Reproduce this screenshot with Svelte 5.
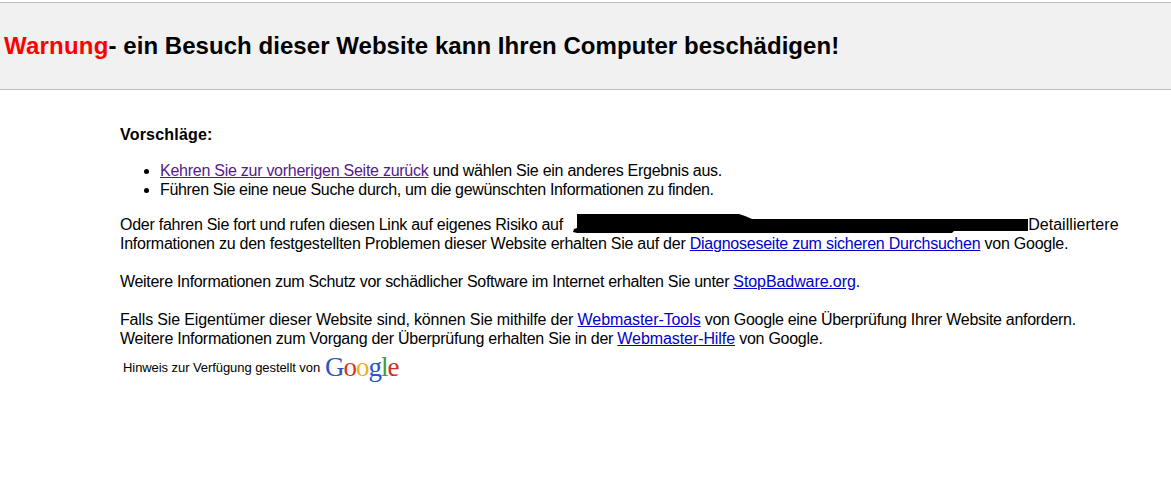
<script>
  const logo = [
    { ch: 'G', color: '#2a55c4' },
    { ch: 'o', color: '#d8321f' },
    { ch: 'o', color: '#e5b21c' },
    { ch: 'g', color: '#2a55c4' },
    { ch: 'l', color: '#3d9a3a' },
    { ch: 'e', color: '#c9321f' }
  ];
</script>

<header class="banner">
  <h1><span class="warn">Warnung</span>- ein Besuch dieser Website kann Ihren Computer beschädigen!</h1>
</header>

<main class="content">
  <p class="heading">Vorschläge:</p>
  <ul>
    <li><a class="visited" href="#back">Kehren Sie zur vorherigen Seite zurück</a> und wählen Sie ein anderes Ergebnis aus.</li>
    <li class="tight">Führen Sie eine neue Suche durch, um die gewünschten Informationen zu finden.</li>
  </ul>
  <p class="para first">
    Oder fahren Sie fort und rufen diesen Link auf eigenes Risiko auf
    <svg class="redact" width="459" height="21" viewBox="0 0 459 21" aria-hidden="true">
      <path d="M8 1 L170 1 L176 3 L183 6 L459 6 L459 18 L385 18 L383 20 L8 20 L4 19 L5 16 L8 15 Z" fill="#000" />
    </svg><span class="detail">Detailliertere</span><br />
    <span class="diag">Informationen zu den festgestellten Problemen dieser Website erhalten Sie auf der <a href="#diag">Diagnoseseite zum sicheren Durchsuchen</a> von Google.</span>
  </p>
  <p class="para">
    <span class="narrow">Weitere Informationen zum Schutz vor schädlicher Software im Internet erhalten Sie unter <a class="wide" href="#sb">StopBadware.org</a>.</span>
  </p>
  <p class="para">
    <span class="loose">Falls Sie Eigentümer dieser Website sind, können Sie mithilfe der <a class="wide" href="#wt">Webmaster-Tools</a></span>
    <span class="narrow">von Google eine Überprüfung Ihrer Website anfordern.</span><br />
    Weitere Informationen zum Vorgang der Überprüfung erhalten Sie in der <a class="wide" href="#wh">Webmaster-Hilfe</a> von Google.
  </p>
  <div class="credit">
    <span>Hinweis zur Verfügung gestellt von</span>
    <span class="logo">{#each logo as l}<span style={`color:${l.color}`}>{l.ch}</span>{/each}</span>
  </div>
</main>

<style>
  :global(body) {
    margin: 0;
    background: #fff;
    overflow: hidden;
  }

  .banner {
    margin-top: 2px;
    height: 86px;
    background: #f1f1f1;
    border-top: 1px solid #c0c0c0;
    border-bottom: 1px solid #c0c0c0;
    display: flex;
    align-items: center;
    padding-left: 4px;
  }

  h1 {
    margin: 0;
    font: bold 24px/28px "Liberation Sans", Arial, sans-serif;
    letter-spacing: 0.05px;
    color: #000;
    white-space: nowrap;
  }

  .warn {
    color: #f00;
    letter-spacing: 0.2px;
  }

  .content {
    padding: 35px 0 0 120px;
    font: 16px/19px "Liberation Sans", Arial, sans-serif;
    letter-spacing: -0.26px;
    color: #000;
    white-space: nowrap;
  }

  p {
    margin: 0;
  }

  .heading {
    font-weight: bold;
    letter-spacing: 0.2px;
  }

  ul {
    margin: 17px 0 0;
    padding: 0 0 0 40px;
  }

  .tight {
    letter-spacing: -0.33px;
  }

  .narrow {
    letter-spacing: -0.3px;
  }

  .loose {
    letter-spacing: -0.15px;
  }

  .detail {
    letter-spacing: 0.05px;
  }

  .diag {
    letter-spacing: -0.24px;
  }

  .para {
    margin-top: 19px;
  }

  .para.first {
    margin-top: 16px;
  }

  a {
    color: #0000cc;
  }

  a.visited {
    color: #551a8b;
  }

  a.wide {
    letter-spacing: -0.08px;
  }

  .redact {
    margin: -5px 0 -5px 2px;
    vertical-align: 1px;
  }

  .credit {
    display: flex;
    align-items: center;
    gap: 5px;
    height: 38px;
    padding-left: 3px;
    font-size: 13px;
    letter-spacing: -0.07px;
  }

  .logo {
    font: 27px/30px "Liberation Serif", serif;
    letter-spacing: -1px;
  }
</style>
